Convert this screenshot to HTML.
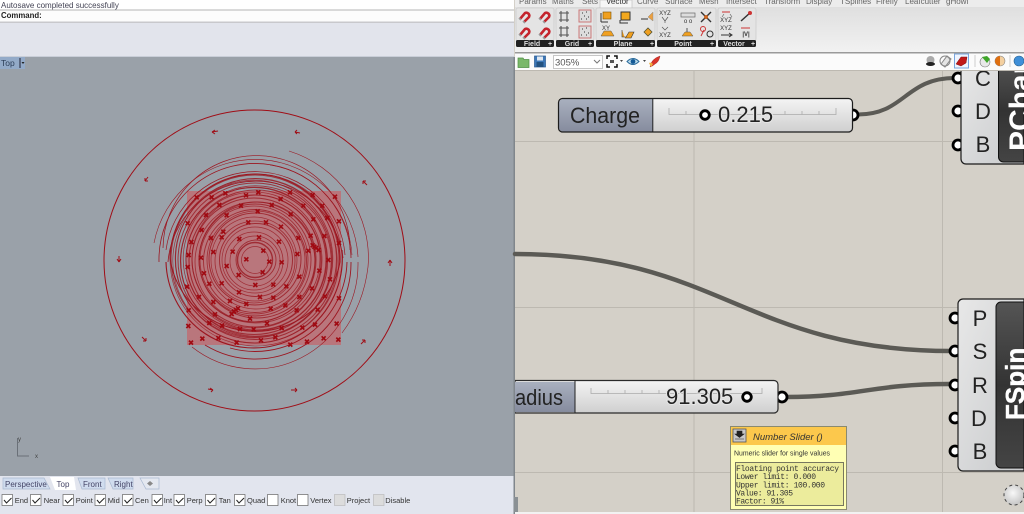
<!DOCTYPE html>
<html><head><meta charset="utf-8"><title>Rhino and Grasshopper</title>
<style>
html,body{margin:0;padding:0;width:1024px;height:514px;overflow:hidden;background:#d4d0c8}
svg{display:block}
text{font-family:"Liberation Sans",sans-serif}
.m{font-family:"Liberation Mono",monospace;font-size:8px;fill:#333}
.s{font-size:7.500px;fill:#333}
.tb{font-size:8px;fill:#446}
.t{font-size:8px;fill:#445}
.r{font-size:8px;fill:#666}
.ic{font-size:6px;fill:#333;text-anchor:middle}
.gl{font-size:7px;font-weight:bold;fill:#ddd;text-anchor:middle}
.big{font-size:22px;fill:#222}
.let{font-size:22px;fill:#222;text-anchor:middle}
.rg circle{fill:none;stroke:#9a1c24;stroke-opacity:.82}
</style></head><body>
<svg width="1024" height="514" viewBox="0 0 1024 514" xmlns="http://www.w3.org/2000/svg">
<defs>
<linearGradient id="lab" x1="0" y1="0" x2="0" y2="1"><stop offset="0" stop-color="#a9b0bf"/><stop offset="1" stop-color="#868c9e"/></linearGradient>
<linearGradient id="val" x1="0" y1="0" x2="0" y2="1"><stop offset="0" stop-color="#f4f4f4"/><stop offset="1" stop-color="#cfcfcf"/></linearGradient>
<linearGradient id="body" x1="0" y1="0" x2="1" y2="1"><stop offset="0" stop-color="#e8e8e8"/><stop offset="1" stop-color="#c8cacc"/></linearGradient>
<linearGradient id="dark" x1="0" y1="0" x2="0" y2="1"><stop offset="0" stop-color="#555"/><stop offset=".5" stop-color="#333"/><stop offset="1" stop-color="#444"/></linearGradient>
<linearGradient id="rib" x1="0" y1="0" x2="0" y2="1"><stop offset="0" stop-color="#dcdcdc"/><stop offset="1" stop-color="#f2f2f2"/></linearGradient>
<radialGradient id="orb" cx=".45" cy=".4" r=".7"><stop offset="0" stop-color="#f8f8f8"/><stop offset="1" stop-color="#bdbdbd"/></radialGradient>
<path id="x" d="M-6 -6L6 6M6 -6L-6 6" stroke="#a00a12" stroke-width="5" fill="none"/>
<g id="mag"><path d="M-4 3L1 -3A3 3 0 0 1 5 1L0 6" stroke="#c4242c" stroke-width="2.600" fill="none"/><path d="M-5 2l2 2M-1 5l2 2" stroke="#999" stroke-width="1.600"/></g>
<g id="hash"><path d="M-5 -4H5M-5 3H5M-3 -6V5M3 -6V5" stroke="#555" stroke-width="1.100" fill="none"/></g>
<g id="dots"><rect x="-6" y="-6" width="12" height="12" fill="#ddd" stroke="#c77" stroke-width="1"/><path d="M-3 -3h1M1 -4h1M-1 0h1M3 1h1M-4 3h1M1 3h1" stroke="#555" stroke-width="1.200"/></g>
<g id="grip"><circle r="5" fill="#fff" stroke="#000" stroke-width="2.800"/></g>
</defs>

<!-- Rhino left pane -->
<rect x="0" y="0" width="514" height="514" fill="#e2e4ec"/>
<rect x="0" y="0" width="514" height="10" fill="#fff"/>
<rect x="0" y="9.500" width="514" height="1" fill="#b4b4b4"/>
<rect x="0" y="10.500" width="514" height="11" fill="#fcfcfc"/>
<rect x="0" y="21.500" width="514" height="1.500" fill="#c8c8cc"/>
<text x="1" y="8" class="t">Autosave completed successfully</text>
<text x="1" y="18" font-size="7.800" font-weight="bold" fill="#222">Command:</text>

<!-- viewport -->
<rect x="0" y="57" width="514" height="419" fill="#9aa1a9"/>
<rect x="0" y="56" width="514" height="1" fill="#c9ced8"/>
<rect x="0" y="57" width="25" height="12" fill="#93aac8"/>
<text x="1" y="66" font-size="8.500" fill="#2c3e58">Top</text>
<rect x="19.500" y="58" width="1" height="10" fill="#223"/>
<path d="M21.500 62h3l-1.500 2z" fill="#222"/>

<!-- drawing -->
<rect x="187" y="191" width="154" height="154" fill="#b9767c"/>
<circle cx="254.500" cy="260.500" r="150.500" fill="none" stroke="#a00d16" stroke-width="1"/>
<g class="rg">
<circle cx="255" cy="260" r="13.500" stroke-width=".7"/>
<circle cx="255" cy="260" r="17.500" stroke-width="1.400"/>
<circle cx="256" cy="260" r="20" stroke-width=".9"/>
<circle cx="255" cy="261" r="25" stroke-width=".7"/>
<circle cx="254" cy="261" r="29" stroke-width=".8"/>
<circle cx="255" cy="260" r="33" stroke-width=".7"/>
<circle cx="256" cy="260" r="36.500" stroke-width="1"/>
<circle cx="255" cy="261" r="40" stroke-width=".8"/>
<circle cx="254" cy="260" r="43" stroke-width=".7"/>
<circle cx="255" cy="259" r="46" stroke-width="1"/>
<circle cx="256" cy="260" r="49" stroke-width=".8"/>
<circle cx="255" cy="261" r="51.500" stroke-width=".9"/>
<circle cx="254" cy="260" r="54" stroke-width=".8"/>
<circle cx="255" cy="260" r="56" stroke-width=".9"/>
<circle cx="257" cy="260" r="58" stroke-width="1"/>
<circle cx="255" cy="262" r="60" stroke-width=".8"/>
<circle cx="254" cy="260" r="62" stroke-width="1"/>
<circle cx="256" cy="259" r="64" stroke-width=".8"/>
<circle cx="255" cy="261" r="66" stroke-width="1.100"/>
<circle cx="254" cy="260" r="68" stroke-width=".8"/>
<circle cx="256" cy="260" r="70" stroke-width="1.100"/>
<circle cx="255" cy="259" r="71.800" stroke-width=".8"/>
<circle cx="254" cy="261" r="73.500" stroke-width="1.100"/>
<circle cx="256" cy="261" r="75.200" stroke-width=".8"/>
<circle cx="255" cy="260" r="77" stroke-width="1"/>
<circle cx="254" cy="259" r="78.800" stroke-width=".8"/>
<circle cx="256" cy="259" r="80.500" stroke-width="1"/>
<circle cx="255" cy="261" r="82.200" stroke-width=".7"/>
<circle cx="255" cy="259" r="84" stroke-width="1"/>
<circle cx="256" cy="260" r="86" stroke-width=".7"/>
</g>
<g fill="none" stroke="#9c1620">
<path d="M170 258A85 86 0 0 1 340 262A86 84 0 0 1 170 258" stroke-width="1"/>
<path d="M168 262A88 88 0 0 1 343 258" stroke-width=".8"/>
<path d="M342 250A89 90 0 0 1 200 330A90 90 0 0 1 166 262" stroke-width="1.100"/>
<path d="M166 250A90 90 0 0 1 345 255" stroke-width=".7"/>
<path d="M347 262A92 92 0 0 1 230 348" stroke-width=".9"/>
<path d="M163 248A93 93 0 0 1 350 250" stroke-width=".7"/>
<path d="M351 262A96 96 0 0 1 205 345" stroke-width=".9"/>
<path d="M159 262A96 96 0 0 1 272 165A96 96 0 0 1 351 258" stroke-width=".8"/>
<path d="M154 243A103 103 0 0 1 358 257" stroke-width=".6"/>
<path d="M358 262A103 105 0 0 1 192 347" stroke-width=".6"/>
<path d="M270 165A97 97 0 0 1 352 255" stroke-width=".5"/>
<path d="M289 151A114 112 0 0 1 368 267A113 128 0 0 1 342 333" stroke-width=".6"/>
</g>
<g transform="translate(160 160) scale(.3333)">
<use href="#x" x="110" y="112"/><use href="#x" x="155" y="112"/><use href="#x" x="196" y="100"/><use href="#x" x="258" y="106"/><use href="#x" x="295" y="97"/><use href="#x" x="390" y="97"/><use href="#x" x="458" y="105"/><use href="#x" x="525" y="110"/>
<use href="#x" x="178" y="135"/><use href="#x" x="243" y="137"/><use href="#x" x="335" y="135"/><use href="#x" x="362" y="117"/><use href="#x" x="430" y="137"/><use href="#x" x="487" y="137"/>
<use href="#x" x="138" y="165"/><use href="#x" x="200" y="166"/><use href="#x" x="293" y="154"/><use href="#x" x="392" y="163"/><use href="#x" x="460" y="178"/><use href="#x" x="502" y="174"/><use href="#x" x="537" y="184"/>
<use href="#x" x="83" y="190"/><use href="#x" x="265" y="187"/><use href="#x" x="318" y="187"/><use href="#x" x="363" y="200"/><use href="#x" x="125" y="210"/><use href="#x" x="190" y="215"/><use href="#x" x="185" y="232"/><use href="#x" x="153" y="234"/><use href="#x" x="238" y="237"/><use href="#x" x="297" y="232"/><use href="#x" x="415" y="234"/><use href="#x" x="452" y="227"/><use href="#x" x="493" y="228"/><use href="#x" x="357" y="245"/>
<use href="#x" x="94" y="246"/><use href="#x" x="537" y="249"/><use href="#x" x="463" y="260"/><use href="#x" x="458" y="256"/><use href="#x" x="468" y="264"/><use href="#x" x="445" y="272"/><use href="#x" x="476" y="270"/>
<use href="#x" x="160" y="276"/><use href="#x" x="218" y="275"/><use href="#x" x="310" y="272"/><use href="#x" x="412" y="282"/><use href="#x" x="86" y="285"/><use href="#x" x="123" y="293"/><use href="#x" x="259" y="298"/><use href="#x" x="328" y="305"/><use href="#x" x="365" y="307"/><use href="#x" x="505" y="300"/><use href="#x" x="83" y="321"/><use href="#x" x="200" y="318"/><use href="#x" x="308" y="337"/><use href="#x" x="478" y="332"/><use href="#x" x="132" y="340"/><use href="#x" x="236" y="345"/><use href="#x" x="418" y="350"/><use href="#x" x="510" y="358"/>
<use href="#x" x="148" y="371"/><use href="#x" x="185" y="370"/><use href="#x" x="286" y="375"/><use href="#x" x="340" y="374"/><use href="#x" x="379" y="379"/><use href="#x" x="81" y="380"/><use href="#x" x="456" y="385"/><use href="#x" x="237" y="397"/><use href="#x" x="117" y="411"/><use href="#x" x="300" y="411"/><use href="#x" x="340" y="413"/><use href="#x" x="418" y="411"/><use href="#x" x="495" y="409"/><use href="#x" x="537" y="415"/>
<use href="#x" x="160" y="426"/><use href="#x" x="210" y="423"/><use href="#x" x="259" y="432"/><use href="#x" x="332" y="446"/><use href="#x" x="376" y="436"/><use href="#x" x="473" y="449"/><use href="#x" x="410" y="451"/><use href="#x" x="86" y="451"/><use href="#x" x="228" y="450"/><use href="#x" x="222" y="455"/><use href="#x" x="234" y="445"/><use href="#x" x="215" y="462"/><use href="#x" x="165" y="463"/><use href="#x" x="270" y="476"/>
<use href="#x" x="148" y="489"/><use href="#x" x="321" y="490"/><use href="#x" x="465" y="494"/><use href="#x" x="530" y="491"/><use href="#x" x="85" y="498"/><use href="#x" x="186" y="497"/><use href="#x" x="240" y="507"/><use href="#x" x="281" y="508"/><use href="#x" x="365" y="504"/><use href="#x" x="427" y="503"/><use href="#x" x="127" y="536"/><use href="#x" x="175" y="534"/><use href="#x" x="93" y="548"/><use href="#x" x="230" y="548"/><use href="#x" x="303" y="541"/><use href="#x" x="346" y="532"/><use href="#x" x="391" y="554"/><use href="#x" x="441" y="545"/><use href="#x" x="491" y="535"/><use href="#x" x="535" y="539"/>
</g>
<!-- outer arrows -->
<g fill="none" stroke="#a00d16" stroke-width="1">
<path d="M218 131L212 132M212 132l3 -2M212 132l3 2"/>
<path d="M300 133L295 132M295 132l2 -2M295 132l2 2"/>
<path d="M367 185L363 181M363 181v3M363 181h3"/>
<path d="M390 266V260M390 260l-2 3M390 260l2 3"/>
<path d="M361 344L365 340M365 340h-3M365 340v3"/>
<path d="M291 390H297M297 390l-2 -2M297 390l-2 2"/>
<path d="M208 389L213 390M213 390l-3 -2M213 390l-2 2"/>
<path d="M142 337L146 341M146 341v-3M146 341h-3"/>
<path d="M119 256V262M119 262l-2 -3M119 262l2 -3"/>
<path d="M148 177L145 181M145 181h3M145 181v-3"/>
</g>
<!-- axis -->
<path d="M17.500 438V456H29" fill="none" stroke="#6a7078" stroke-width="1"/>
<text x="18" y="441" font-size="6" fill="#444">y</text>
<text x="35" y="458" font-size="6" fill="#444">x</text>

<!-- viewport tabs -->
<rect x="0" y="476" width="514" height="38" fill="#e2e5ee"/>
<path d="M3 478H44L50 489H3Z" fill="#d0dcee" stroke="#a8b8d0" stroke-width=".7"/>
<path d="M50 477H74L76 490H55Z" fill="#fff"/>
<path d="M78 478H105V489H82Z" fill="#d0dcee" stroke="#a8b8d0" stroke-width=".7"/>
<path d="M108 478H133V489H113Z" fill="#d0dcee" stroke="#a8b8d0" stroke-width=".7"/>
<path d="M140 478H159V489H146Z" fill="#e4e8f0" stroke="#a8b8d0" stroke-width=".7"/>
<text x="5" y="487" class="tb">Perspective</text>
<text x="56.500" y="487" class="tb" fill="#333">Top</text>
<text x="83" y="487" class="tb">Front</text>
<text x="114" y="487" class="tb">Right</text>
<path d="M150 481l3 2.500l-3 2.500l-3 -2.500z" fill="#888"/>

<!-- osnaps -->
<g fill="#fff" stroke="#666" stroke-width=".7">
<rect x="2" y="494.500" width="10.500" height="11"/><rect x="30.500" y="494.500" width="10.500" height="11"/><rect x="63" y="494.500" width="10.500" height="11"/><rect x="95" y="494.500" width="10.500" height="11"/><rect x="122.500" y="494.500" width="10.500" height="11"/><rect x="152" y="494.500" width="10.500" height="11"/><rect x="174" y="494.500" width="10.500" height="11"/><rect x="205.500" y="494.500" width="10.500" height="11"/><rect x="234.500" y="494.500" width="10.500" height="11"/><rect x="267.500" y="494.500" width="10.500" height="11"/><rect x="297.500" y="494.500" width="10.500" height="11"/>
<rect x="334.500" y="494.500" width="10.500" height="11" fill="#dcdcdc" stroke="#bbb"/><rect x="373.500" y="494.500" width="10.500" height="11" fill="#dcdcdc" stroke="#bbb"/>
</g>
<g fill="none" stroke="#222" stroke-width="1">
<path d="M4 500l2.500 3l5 -5"/><path d="M32.500 500l2.500 3l5 -5"/><path d="M65 500l2.500 3l5 -5"/><path d="M97 500l2.500 3l5 -5"/><path d="M124.500 500l2.500 3l5 -5"/><path d="M154 500l2.500 3l5 -5"/><path d="M176 500l2.500 3l5 -5"/><path d="M207.500 500l2.500 3l5 -5"/><path d="M236.500 500l2.500 3l5 -5"/>
</g>
<text x="14.700" y="503" class="s">End</text><text x="43.700" y="503" class="s">Near</text><text x="75.700" y="503" class="s">Point</text><text x="107.700" y="503" class="s">Mid</text><text x="135" y="503" class="s">Cen</text><text x="163.700" y="503" class="s">Int</text><text x="186.700" y="503" class="s">Perp</text><text x="218.700" y="503" class="s">Tan</text><text x="247" y="503" class="s">Quad</text><text x="280.700" y="503" class="s">Knot</text><text x="310.300" y="503" class="s">Vertex</text><text x="346.700" y="503" class="s">Project</text><text x="385.300" y="503" class="s">Disable</text>

<!-- divider -->
<rect x="513.500" y="57" width="1.500" height="457" fill="#80868c"/>

<!-- canvas -->
<rect x="515" y="53" width="509" height="459" fill="#d4d0c8"/>
<rect x="515" y="512" width="509" height="2" fill="#f2f2f2"/>
<g fill="#bdb9b1">
<rect x="693.500" y="71" width="1" height="441"/><rect x="942" y="71" width="1" height="441"/>
<rect x="515" y="141" width="509" height="1"/><rect x="515" y="307" width="509" height="1"/><rect x="515" y="472" width="509" height="1"/>
</g>
<rect x="514" y="497" width="4" height="15" fill="#8a9094"/>

<!-- wires -->
<g fill="none" stroke="#5b5a55" stroke-linecap="round">
<path d="M858 114.500C905 114.500 905 78 955 78" stroke-width="4"/>
<path d="M515 254C720 254 745 351 952 351" stroke-width="4.500"/>
<path d="M786 397C860 397 870 384 950 384" stroke-width="4.500"/>
</g>

<!-- Charge slider -->
<use href="#grip" x="853" y="115"/>
<rect x="558.500" y="98.500" width="294" height="33.500" rx="4" fill="url(#val)"/>
<path d="M652.500 99H563a4 4 0 0 0 -4 4v24.500a4 4 0 0 0 4 4h89.500z" fill="url(#lab)"/>
<path d="M652.800 98.500V132" stroke="#222" stroke-width="1"/>
<rect x="558.500" y="98.500" width="294" height="33.500" rx="4" fill="none" stroke="#1c1c1c" stroke-width="1.200"/>
<text x="570" y="123" class="big" textLength="70" lengthAdjust="spacingAndGlyphs">Charge</text>
<path d="M669 108v6.500H836V108M686 111v3.500M703 111v3.500M720 111v3.500M785 111v3.500M802 111v3.500M819 111v3.500" fill="none" stroke="#aaa" stroke-width=".8"/>
<circle cx="705" cy="115" r="4.300" fill="#fff" stroke="#000" stroke-width="2.800"/>
<text x="718" y="122" class="big" style="paint-order:stroke" stroke="#e6e6e6" stroke-width="2">0.215</text>

<!-- Radius slider -->
<use href="#grip" x="782" y="397"/>
<path d="M515 380.500H774a4 4 0 0 1 4 4V409a4 4 0 0 1 -4 4H515Z" fill="url(#val)" stroke="#2a2a2a" stroke-width="1.200"/>
<path d="M515 382H575V412H515Z" fill="url(#lab)"/>
<path d="M575 380.500V413" stroke="#222" stroke-width="1"/>
<rect x="513.500" y="370" width="1.500" height="50" fill="#80868c"/>
<text x="515" y="405" class="big" textLength="48" lengthAdjust="spacingAndGlyphs">adius</text>
<path d="M591 388v5.500H762V388M608 390v3.500M625 390v3.500M642 390v3.500M659 390v3.500" fill="none" stroke="#aaa" stroke-width=".8"/>
<text x="666" y="404" class="big" style="paint-order:stroke" stroke="#e6e6e6" stroke-width="2">91.305</text>
<circle cx="747" cy="397" r="4.300" fill="#fff" stroke="#000" stroke-width="2.800"/>

<!-- PCharge component -->
<use href="#grip" x="958" y="78"/><use href="#grip" x="958" y="111"/><use href="#grip" x="958" y="145"/>
<path d="M961 60V159a5 5 0 0 0 5 5H1024V60Z" fill="url(#body)" stroke="#1a1a1a" stroke-width="1.200"/>
<path d="M998.500 60V157a5 5 0 0 0 5 5H1024V60Z" fill="url(#dark)" stroke="#111" stroke-width="1"/>
<text x="983" y="86" class="let">C</text><text x="983" y="119" class="let">D</text><text x="983" y="152" class="let">B</text>
<text transform="translate(1030 151) rotate(-90)" font-size="30" font-weight="bold" fill="#fff">PChar</text>

<!-- FSpin component -->
<use href="#grip" x="955" y="318"/><use href="#grip" x="955" y="351"/><use href="#grip" x="955" y="385"/><use href="#grip" x="955" y="418"/><use href="#grip" x="955" y="451"/>
<path d="M1024 299H963a5 5 0 0 0 -5 5V466a5 5 0 0 0 5 5H1024Z" fill="url(#body)" stroke="#1a1a1a" stroke-width="1.200"/>
<path d="M1024 302H1001a5 5 0 0 0 -5 5V463a5 5 0 0 0 5 5H1024Z" fill="url(#dark)" stroke="#111" stroke-width="1"/>
<text x="980" y="326" class="let">P</text><text x="980" y="359" class="let">S</text><text x="980" y="393" class="let">R</text><text x="979" y="426" class="let">D</text><text x="980" y="459" class="let">B</text>
<text transform="translate(1024 420) rotate(-90)" font-size="26" font-weight="bold" fill="#fff" stroke="#fff" stroke-width=".4">FSpin</text>

<!-- tooltip -->
<rect x="730.500" y="426.500" width="116" height="83" fill="#ffffb4" stroke="#8a8a70" stroke-width="1"/>
<rect x="731" y="427" width="115" height="18" fill="#fcc84c"/>
<rect x="733" y="429" width="13" height="13" fill="#c8c8c8" stroke="#555" stroke-width=".8"/>
<path d="M737 431h5v3h2l-4.500 3.500l-4.500 -3.500h2zM735 439h9" fill="#222" stroke="#222" stroke-width=".6"/>
<text x="753" y="440" font-size="9.500" font-style="italic" fill="#333">Number Slider ()</text>
<text x="734" y="455.500" font-size="7" fill="#333" textLength="96" lengthAdjust="spacingAndGlyphs">Numeric slider for single values</text>
<rect x="735.500" y="462.500" width="108" height="43" fill="#ecec9c" stroke="#77775f" stroke-width="1"/>
<text x="736" y="471" class="m" textLength="103">Floating point accuracy</text>
<text x="736" y="479" class="m" textLength="80">Lower limit: 0.000</text>
<text x="736" y="487.500" class="m" textLength="89">Upper limit: 100.000</text>
<text x="736" y="495.500" class="m" textLength="57">Value: 91.305</text>
<text x="736" y="503.500" class="m" textLength="48">Factor: 91%</text>

<!-- bottom right widget -->
<circle cx="1014" cy="495" r="10" fill="url(#orb)" stroke="#444" stroke-width="1" stroke-dasharray="3 3"/>

<!-- GH ribbon (drawn over components) -->
<rect x="515" y="0" width="509" height="53" fill="url(#rib)"/>
<rect x="515" y="0" width="509" height="7" fill="#ececec"/>
<rect x="600" y="0" width="32" height="8" fill="#f6f6f6" stroke="#bbb" stroke-width=".6"/>
<g class="r">
<text x="519" y="4">Params</text><text x="552" y="4">Maths</text><text x="582" y="4">Sets</text><text x="606" y="4" fill="#333">Vector</text><text x="637" y="4">Curve</text><text x="665" y="4">Surface</text><text x="699" y="4">Mesh</text><text x="726" y="4">Intersect</text><text x="764" y="4">Transform</text><text x="806" y="4">Display</text><text x="840" y="4">TSplines</text><text x="876" y="4">Firefly</text><text x="905" y="4">Leafcutter</text><text x="946" y="4">gHowl</text>
</g>
<g fill="#e4e4e4" stroke="#c4c4c4" stroke-width=".6">
<rect x="516" y="8" width="38" height="33" rx="2"/><rect x="556" y="8" width="38" height="33" rx="2"/><rect x="596" y="8" width="59" height="33" rx="2"/><rect x="657" y="8" width="59" height="33" rx="2"/><rect x="718" y="8" width="38" height="33" rx="2"/>
</g>
<g fill="#222">
<rect x="516" y="40" width="38" height="7" rx="1.500"/><rect x="556" y="40" width="38" height="7" rx="1.500"/><rect x="596" y="40" width="59" height="7" rx="1.500"/><rect x="657" y="40" width="59" height="7" rx="1.500"/><rect x="718" y="40" width="38" height="7" rx="1.500"/>
</g>
<text x="532" y="46" class="gl">Field</text><text x="572" y="46" class="gl">Grid</text><text x="623" y="46" class="gl">Plane</text><text x="683" y="46" class="gl">Point</text><text x="734" y="46" class="gl">Vector</text>
<g fill="#ddd" font-size="7" font-weight="bold"><text x="548" y="46">+</text><text x="588" y="46">+</text><text x="650" y="46">+</text><text x="710" y="46">+</text><text x="751" y="46">+</text></g>
<use href="#mag" x="524" y="16"/><use href="#mag" x="544" y="16"/><use href="#mag" x="524" y="32"/><use href="#mag" x="544" y="32"/>
<use href="#hash" x="564" y="17"/><use href="#dots" x="585" y="16"/><use href="#hash" x="564" y="32"/><use href="#dots" x="585" y="32"/>
<!-- plane icons -->
<rect x="603" y="12" width="8" height="7" fill="#f0a020" stroke="#7a5000" stroke-width=".6"/><path d="M601 13v9M601 22h7" stroke="#333" stroke-width="1" fill="none"/>
<rect x="621" y="12" width="9" height="8" fill="#f2a81e" stroke="#333" stroke-width="1"/><path d="M620 20v3h8" stroke="#333" fill="none"/>
<path d="M648 17l5 -5v9z" fill="#eca040" stroke="#888" stroke-width=".5"/><path d="M641 19h7" stroke="#333"/>
<path d="M601 36l3 -5h7l3 5z" fill="#f0a020" stroke="#555" stroke-width=".5"/><text x="606" y="30" class="ic" font-size="5">XY</text>
<path d="M622 30v7h4l3 -5h5l-3 6h-6" fill="#f0a020" stroke="#333" stroke-width=".6"/>
<path d="M644 32l4 -4l4 4l-4 4z" fill="#f0a020" stroke="#553" stroke-width=".8"/>
<!-- point icons -->
<text x="665" y="15" class="ic">XYZ</text><path d="M662 17l3 4l3 -4M665 21v2" stroke="#555" fill="none" stroke-width=".7"/>
<rect x="681" y="13" width="14" height="4" fill="#ddd" stroke="#666" stroke-width=".7"/><text x="688" y="23" class="ic">o o</text>
<path d="M701 12l10 10M711 12l-10 10" stroke="#333" stroke-width="1.400"/><circle cx="706" cy="17" r="2" fill="#c62"/>
<text x="665" y="37" class="ic">XYZ</text><path d="M662 27l3 3l3 -3" stroke="#555" fill="none" stroke-width=".7"/>
<path d="M682 36l3 -4h5l3 4z" fill="#f0a020" stroke="#555" stroke-width=".5"/><path d="M687 28v4" stroke="#555"/>
<circle cx="703" cy="29" r="2.500" fill="none" stroke="#c33"/><circle cx="710" cy="34" r="3" fill="none" stroke="#333"/><path d="M701 36l3 -6" stroke="#c33"/>
<!-- vector icons -->
<path d="M722 12h8" stroke="#c33"/><path d="M724 14l-2 3M730 14l2 3" stroke="#555" stroke-width=".6" fill="none"/><text x="726" y="22" class="ic">XYZ</text>
<path d="M741 21l10 -9" stroke="#333" stroke-width="1.500"/><circle cx="750" cy="13" r="2" fill="#c33"/>
<text x="726" y="30" class="ic">XYZ</text><path d="M721 35h10" stroke="#333"/><path d="M729 33l3 2l-3 2" fill="none" stroke="#333"/>
<path d="M741 28h9" stroke="#c33"/><text x="746" y="36" class="ic" font-weight="bold">|V|</text>

<!-- toolbar -->
<rect x="515" y="52" width="509" height="1.500" fill="#9a9a9a"/>
<rect x="515" y="53.500" width="509" height="16.500" fill="#fbfbfb"/>
<rect x="515" y="70" width="509" height="1" fill="#bdb9b1"/>
<path d="M518 58h5l1 1.500h5v8h-11z" fill="#7ab86a" stroke="#4f8f44" stroke-width=".7"/>
<rect x="534.500" y="56" width="11" height="11" fill="#3d78b8" stroke="#2a5a90" stroke-width=".7"/><rect x="537" y="56.500" width="6" height="4" fill="#dfe8f2"/><rect x="536.500" y="62" width="7" height="5" fill="#24527f"/>
<rect x="553.500" y="55.500" width="49" height="13" fill="#fff" stroke="#b8b8b8" stroke-width=".8"/>
<text x="555" y="65.500" font-size="9.500" fill="#555">305%</text>
<path d="M594 60l3 3l3 -3" fill="none" stroke="#777"/>
<path d="M607 59v-3h3M614 56h3v3M617 64v3h-3M610 67h-3v-3" fill="none" stroke="#111" stroke-width="1.500"/>
<rect x="610" y="60" width="4" height="3" fill="#555"/>
<path d="M620 60h3l-1.500 2z" fill="#444"/>
<path d="M627 61.500q6 -6 12 0q-6 6 -12 0z" fill="#bcdcec" stroke="#2a6a9a"/><circle cx="633" cy="61.500" r="2.400" fill="#145a96"/>
<path d="M643 60h3l-1.500 2z" fill="#444"/>
<path d="M650 67q1 -8 10 -11q-1 6 -5 8q-2 2 -5 3z" fill="#d8342a" stroke="#922" stroke-width=".4"/><path d="M649 63q2 -1 4 1l-2 3z" fill="#f0b040"/>
<circle cx="930.500" cy="60" r="4" fill="#aaa"/><ellipse cx="930.500" cy="64" rx="4.500" ry="2" fill="#222"/>
<path d="M941 64l6 -8l4 3l-6 8z" fill="#e4e4e4" stroke="#888"/><circle cx="945" cy="61" r="5" fill="none" stroke="#888"/>
<rect x="954.500" y="54" width="14" height="14" fill="#eef4ff" stroke="#7aa6de" stroke-width="1"/>
<path d="M956 64l5 -7h6l-1 6l-5 3z" fill="#c01818" stroke="#801010" stroke-width=".5"/>
<rect x="974.500" y="55" width="1" height="12" fill="#ccc"/>
<circle cx="985" cy="62" r="5" fill="#e8e8e8" stroke="#777" stroke-width=".6"/><path d="M982 57l5 -1l3 3l-3 4z" fill="#3fa62a"/>
<circle cx="1000" cy="61" r="5" fill="#f4d0a0" stroke="#888" stroke-width=".6"/><path d="M1000 56a5 5 0 0 0 0 10z" fill="#e07010"/>
<rect x="1009.500" y="55" width="1" height="12" fill="#ccc"/>
<circle cx="1019" cy="61" r="5" fill="#3f8fd8" stroke="#27608f" stroke-width=".6"/>
</svg>
</body></html>
